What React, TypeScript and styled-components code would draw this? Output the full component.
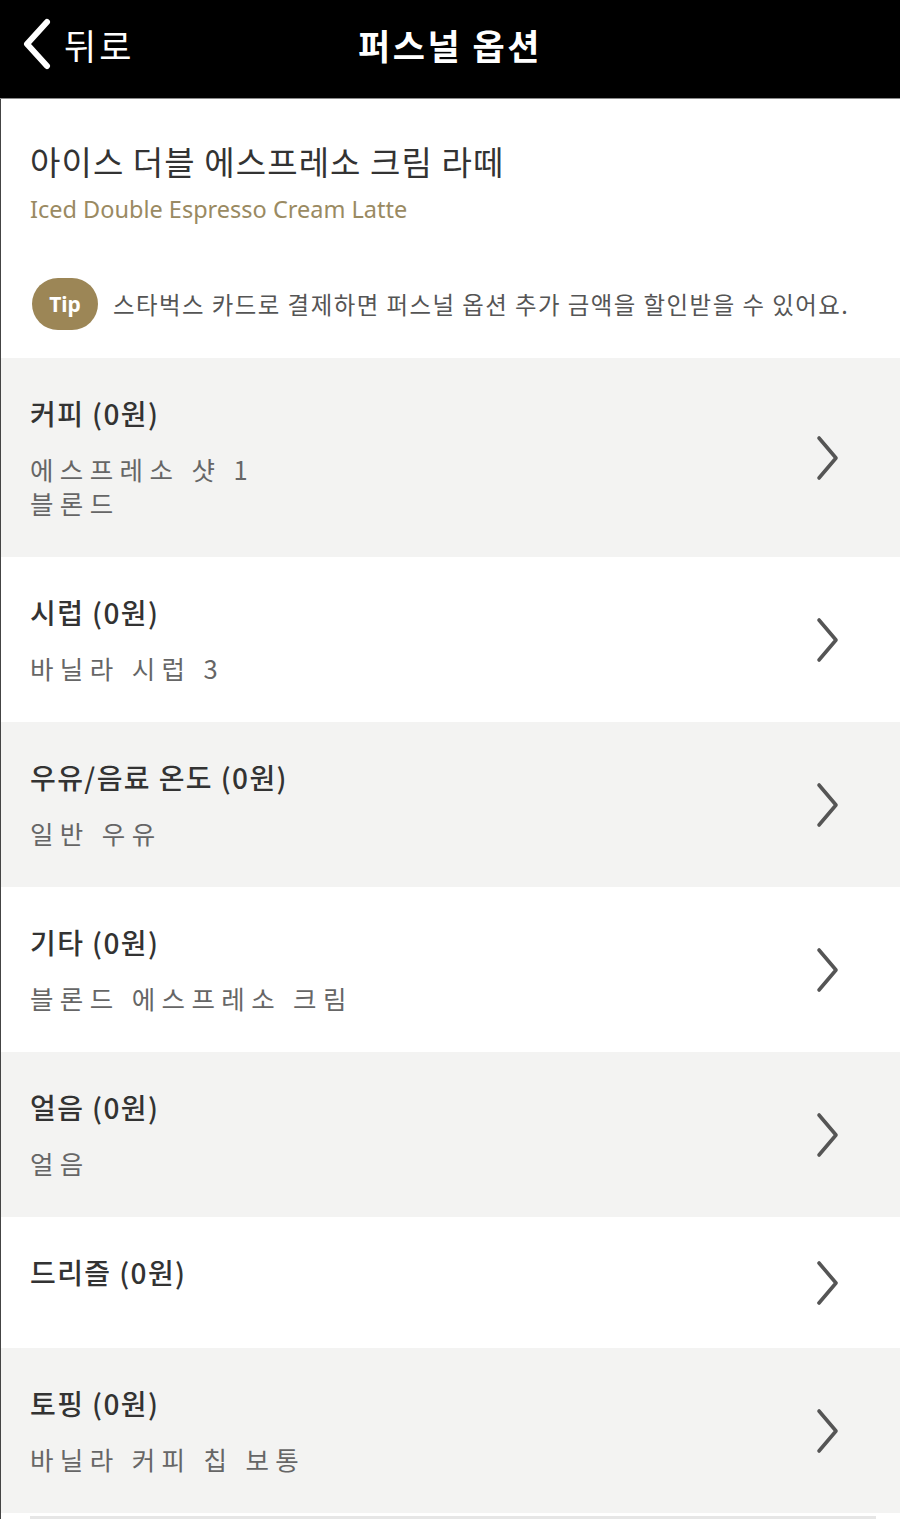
import styled, { createGlobalStyle } from 'styled-components'

const GlobalStyle = createGlobalStyle`
    body {
        margin: 0;
        background: #fff;
        font-family: "Noto Sans CJK KR", "Noto Sans", sans-serif;
    }
`;

const Page = styled.div`
    width: 900px;
    min-height: 1536px;
    background: #fff;
`;

const Header = styled.div`
    position: relative;
    display: flex;
    align-items: center;
    justify-content: center;
    height: 99px;
    padding-bottom: 10px;
    box-sizing: border-box;
    background: #000;
    border-bottom: 1px solid #8a8a8a;
`;

const BackButton = styled.a`
    position: absolute;
    left: 20px;
    top: 0;
    bottom: 10px;
    display: flex;
    align-items: center;
    gap: 10px;
    color: #fff;
    font-size: 35px;
    letter-spacing: 3px;
    text-decoration: none;
`;

const HeaderTitle = styled.h1`
    margin: 0;
    color: #fff;
    font-size: 35px;
    font-weight: 700;
    letter-spacing: 2.5px;
`;

const Content = styled.div`
    border-left: 1px solid #444;
`;

const ProductInfo = styled.div`
    padding: 40px 30px 28px 29px;
`;

const ProductName = styled.h2`
    margin: 0;
    color: #333;
    font-size: 33px;
    font-weight: 400;
    line-height: 44px;
    letter-spacing: 1.1px;
`;

const ProductEnglish = styled.div`
    margin-top: 9px;
    color: #9a8a62;
    font-family: "Noto Sans", sans-serif;
    font-size: 23.5px;
    line-height: 34px;
`;

const TipRow = styled.div`
    display: flex;
    align-items: center;
    gap: 15px;
    margin-top: 52px;
`;

const TipBadge = styled.span`
    display: flex;
    align-items: center;
    justify-content: center;
    width: 66px;
    height: 52px;
    margin-left: 2px;
    border-radius: 26px;
    background: #9c8656;
    color: #fff;
    font-family: "Noto Sans", sans-serif;
    font-size: 21px;
    font-weight: 700;
`;

const TipText = styled.span`
    color: #555;
    font-size: 23.4px;
    letter-spacing: 1.5px;
`;

const OptionList = styled.div`
    padding-bottom: 3px;
    border-bottom: 3px solid #e6e6e6;
    margin-right: 24px;
    margin-left: 29px;
    & > * {
        margin-left: -29px;
        margin-right: -24px;
    }
`;

const OptionRow = styled.a<{ $shaded: boolean }>`
    display: flex;
    align-items: center;
    justify-content: space-between;
    padding: 37px 60px 37px 29px;
    background: ${p => (p.$shaded ? '#f3f3f2' : '#fff')};
    text-decoration: none;
`;

const OptionText = styled.div`
    display: flex;
    flex-direction: column;
`;

const OptionTitle = styled.div`
    color: #333;
    font-size: 28px;
    font-weight: 500;
    line-height: 36px;
    letter-spacing: 1.4px;
`;

const OptionValues = styled.div`
    margin-top: 21px;
    color: #666;
    font-size: 25.5px;
    line-height: 34px;
    letter-spacing: 6.4px;
`;

const BackIcon = () => (
    <svg width="34" height="52" viewBox="0 0 34 52">
        <path d="M27 4 L7 26 L27 48" fill="none" stroke="#fff" strokeWidth="6" strokeLinecap="round" strokeLinejoin="round" />
    </svg>
);

const ChevronIcon = () => (
    <svg width="24" height="46" viewBox="0 0 24 46">
        <path d="M3 3 L20 23 L3 43" fill="none" stroke="#555" strokeWidth="3.6" strokeLinecap="round" strokeLinejoin="round" />
    </svg>
);

const options = [
    { title: '커피 (0원)', values: ['에스프레소 샷 1', '블론드'] },
    { title: '시럽 (0원)', values: ['바닐라 시럽 3'] },
    { title: '우유/음료 온도 (0원)', values: ['일반 우유'] },
    { title: '기타 (0원)', values: ['블론드 에스프레소 크림'] },
    { title: '얼음 (0원)', values: ['얼음'] },
    { title: '드리즐 (0원)', values: [] },
    { title: '토핑 (0원)', values: ['바닐라 커피 칩 보통'] },
];

const App = () => {
    return (
        <Page>
            <GlobalStyle />
            <Header>
                <BackButton href="#">
                    <BackIcon />
                    뒤로
                </BackButton>
                <HeaderTitle>퍼스널 옵션</HeaderTitle>
            </Header>
            <Content>
                <ProductInfo>
                    <ProductName>아이스 더블 에스프레소 크림 라떼</ProductName>
                    <ProductEnglish>Iced Double Espresso Cream Latte</ProductEnglish>
                    <TipRow>
                        <TipBadge>Tip</TipBadge>
                        <TipText>스타벅스 카드로 결제하면 퍼스널 옵션 추가 금액을 할인받을 수 있어요.</TipText>
                    </TipRow>
                </ProductInfo>
                <OptionList>
                    {options.map((opt, i) => (
                        <OptionRow href="#" key={opt.title} $shaded={i % 2 === 0}>
                            <OptionText>
                                <OptionTitle>{opt.title}</OptionTitle>
                                <OptionValues>
                                    {opt.values.map(v => (
                                        <div key={v}>{v}</div>
                                    ))}
                                </OptionValues>
                            </OptionText>
                            <ChevronIcon />
                        </OptionRow>
                    ))}
                </OptionList>
            </Content>
        </Page>
    )
}

export default App
